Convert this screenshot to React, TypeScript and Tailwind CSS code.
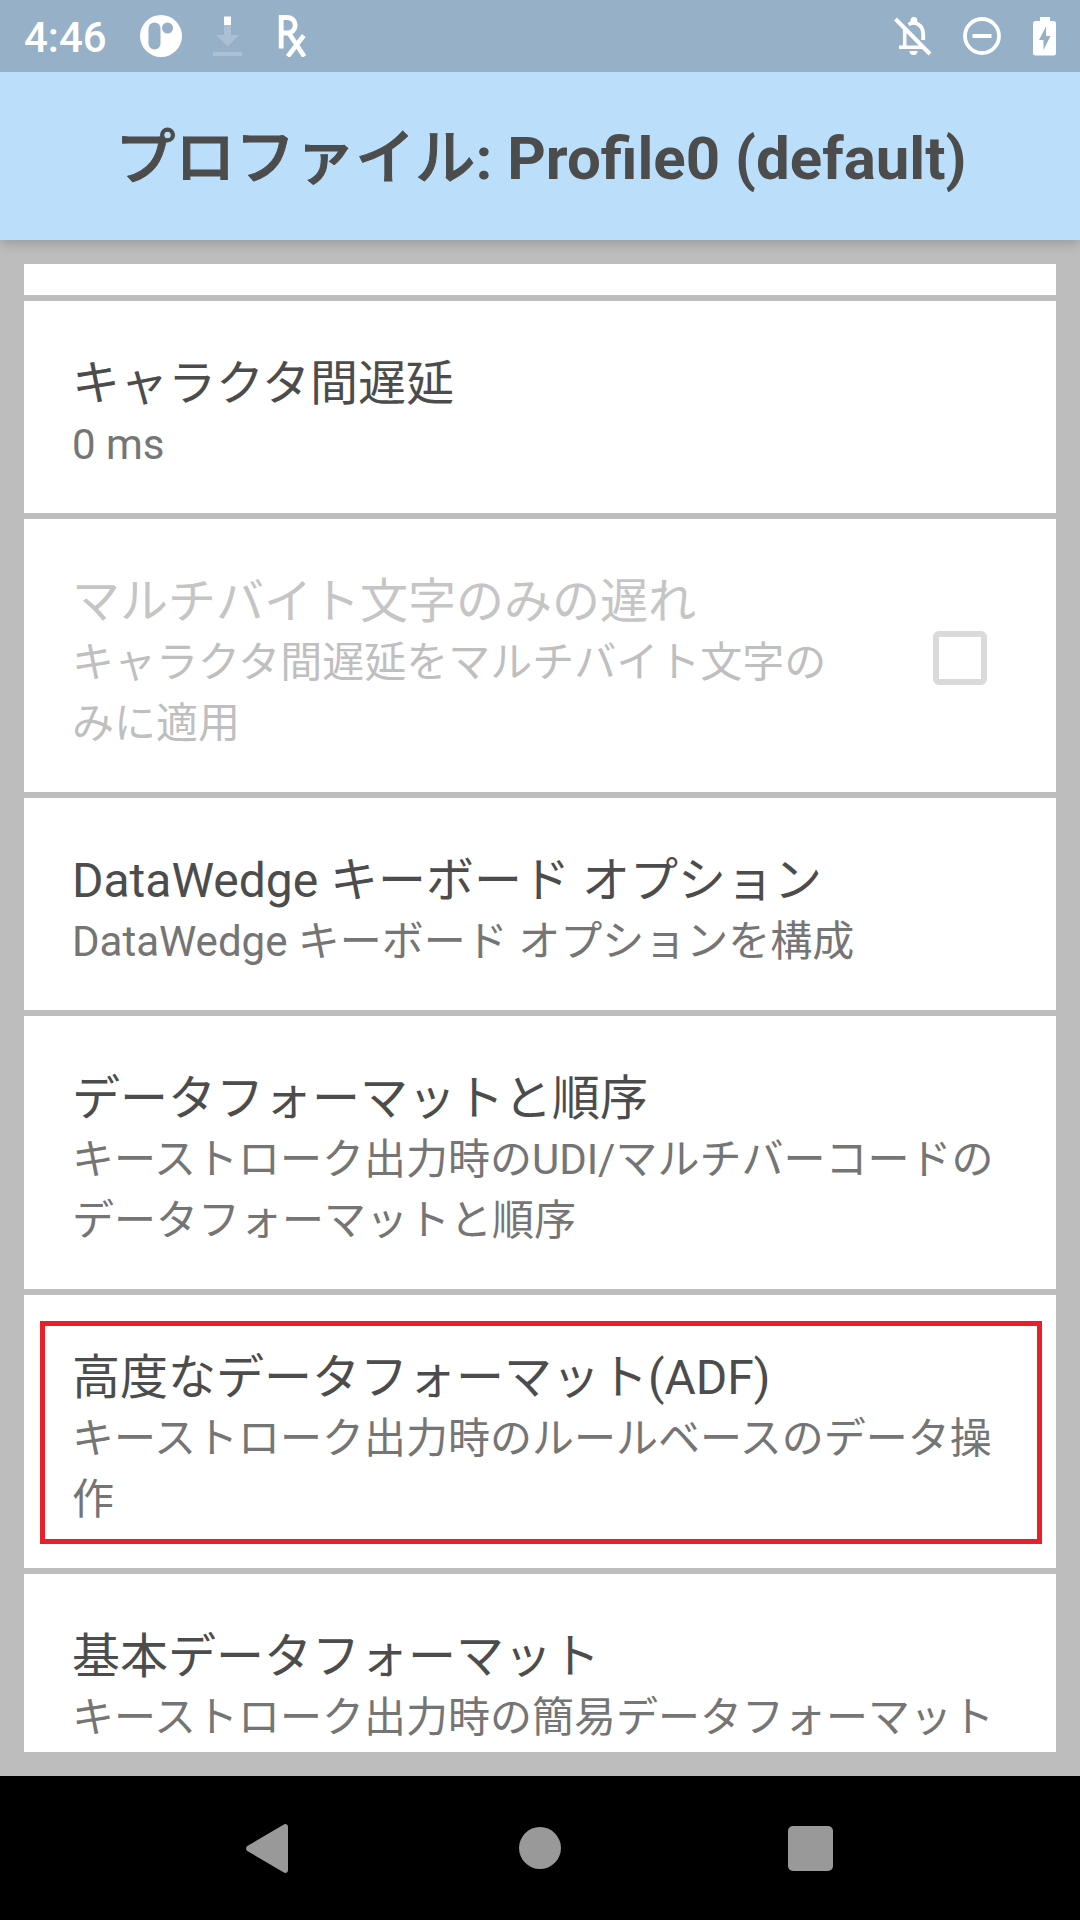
import React from "react";

type Item = { title: string; lines: string[]; h: string; disabled?: boolean; marked?: boolean };

const items: Item[] = [
  { title: "キャラクタ間遅延", lines: ["0 ms"], h: "h-[212px]" },
  { title: "マルチバイト文字のみの遅れ", lines: ["キャラクタ間遅延をマルチバイト文字の", "みに適用"], h: "h-[273px]", disabled: true },
  { title: "DataWedge キーボード オプション", lines: ["DataWedge キーボード オプションを構成"], h: "h-[212px]" },
  { title: "データフォーマットと順序", lines: ["キーストローク出力時のUDI/マルチバーコードの", "データフォーマットと順序"], h: "h-[273px]" },
  { title: "高度なデータフォーマット(ADF)", lines: ["キーストローク出力時のルールベースのデータ操", "作"], h: "h-[273px]", marked: true },
  { title: "基本データフォーマット", lines: ["キーストローク出力時の簡易データフォーマット"], h: "h-[178px]" },
];

function StatusBar() {
  return (
    <header className="z-20 flex h-[72px] shrink-0 items-center justify-between bg-[#96b0c8] pl-6 pr-6 text-white">
      <div className="flex items-center">
        <span className="w-[116px] whitespace-nowrap pt-[3px] text-[42px] font-medium leading-none">4:46</span>
        <svg width="42" height="42" viewBox="0 0 42 42">
          <circle cx="21" cy="21" r="21" fill="#fff" />
          <rect x="8.5" y="7.5" width="12" height="27" rx="6" fill="#96b0c8" />
          <circle cx="27.5" cy="13" r="5.5" fill="#96b0c8" />
        </svg>
        <svg className="ml-[31px]" width="29" height="42" viewBox="0 0 29 42">
          <path d="M11 10h7v10h8L14.500 31.500 3 20h8zM0 37h29v4H0z" fill="#abc0d3" />
          <path d="M11 1.500h7V10h-7z" fill="#fff" />
        </svg>
        <svg className="ml-[36px]" width="30" height="42" viewBox="0 0 30 42" fill="none" stroke="#fff">
          <path d="M3.200 33.500V2.500h6.300a7 7 0 0 1 0 15.500H3.200" strokeWidth="4.800" />
          <path d="M10.500 17.500L26.300 41.500M25.800 20.500L9.800 41.500" strokeWidth="4.600" />
        </svg>
      </div>
      <div className="flex items-center">
        <svg width="38" height="40" viewBox="0 0 38 40" fill="none" stroke="#fff">
          <path d="M1.500 3L36 38" strokeWidth="4" />
          <path d="M10.700 13.500V31M5 31.200h25" strokeWidth="3.600" />
          <path d="M14.500 8.500C21 4.500 29.200 9 29.200 18v6" strokeWidth="3.800" />
          <path d="M16.500 7V4.500a3.400 3.400 0 0 1 6.800 0V7z" fill="#fff" stroke="none" />
          <path d="M15.500 35h8a4 4 0 0 1-8 0z" fill="#fff" stroke="none" />
        </svg>
        <svg className="ml-[31px]" width="38" height="38" viewBox="0 0 38 38" fill="none" stroke="#fff">
          <circle cx="19" cy="19" r="17" strokeWidth="3.800" />
          <path d="M9.500 19h19" strokeWidth="4" />
        </svg>
        <svg className="ml-8" width="23" height="39" viewBox="0 0 23 39">
          <path d="M7 0h10v4h3.500A2.500 2.500 0 0 1 23 6.500v29.500a2.500 2.500 0 0 1-2.500 2.500h-18A2.500 2.500 0 0 1 0 36V6.500A2.500 2.500 0 0 1 2.500 4H7z" fill="#fff" />
          <path d="M13 9.500V19h4.500L10.500 33V23H6z" fill="#96b0c8" />
        </svg>
      </div>
    </header>
  );
}

function Row({ item }: { item: Item }) {
  return (
    <section className={`relative flex ${item.h} shrink-0 items-start justify-between overflow-hidden bg-white pl-12 pr-[69px] pt-[52px]`}>
      <div className="whitespace-nowrap">
        <h2 className={`text-[48px] leading-[61px] ${item.disabled ? "text-[#c5c5c5]" : "text-[#4c4c4c]"}`}>{item.title}</h2>
        {item.lines.map((l) => (
          <p key={l} className={`text-[42px] leading-[61px] ${item.disabled ? "text-[#bfbfbf]" : "text-[#757575]"}`}>{l}</p>
        ))}
      </div>
      {item.disabled && <div className="mt-[60px] size-[54px] shrink-0 rounded-[6px] border-[6px] border-[#dadada]" />}
      {item.marked && <div className="absolute left-4 top-[26px] h-[223px] w-[1002px] border-[5px] border-[#eb1f27]" />}
    </section>
  );
}

export default function App() {
  return (
    <div className="flex h-[1920px] w-[1080px] flex-col overflow-hidden bg-[#bdbdbd] font-[Roboto,'Noto_Sans_CJK_JP',sans-serif]">
      <StatusBar />
      <div className="z-10 flex h-[168px] shrink-0 items-center justify-center bg-[#bbdefb] pl-[2px] pt-[5px] shadow-[0_3px_12px_rgba(0,0,0,0.2)]">
        <h1 className="whitespace-nowrap text-[60px] font-bold text-[#4c4c4c]">
          <span className="font-medium [-webkit-text-stroke:1px_#4c4c4c]">プロファイル</span>: Profile0 (default)
        </h1>
      </div>
      <main className="flex flex-1 flex-col gap-[6px] px-6 pt-6">
        <div className="h-[31px] shrink-0 bg-white" />
        {items.map((i) => <Row key={i.title} item={i} />)}
      </main>
      <nav className="flex h-[144px] shrink-0 items-center bg-black pl-[246px]">
        <svg width="42" height="49" viewBox="0 0 42 49">
          <path d="M37.500.7C39.500-.7 42 .3 42 3v43c0 2.700-2.500 3.700-4.500 2.300L1.300 27a3.200 3.200 0 0 1 0-5z" fill="#999" />
        </svg>
        <div className="ml-[231px] size-[42px] rounded-full bg-[#999]" />
        <div className="ml-[227px] size-[45px] rounded-[5px] bg-[#999]" />
      </nav>
    </div>
  );
}
